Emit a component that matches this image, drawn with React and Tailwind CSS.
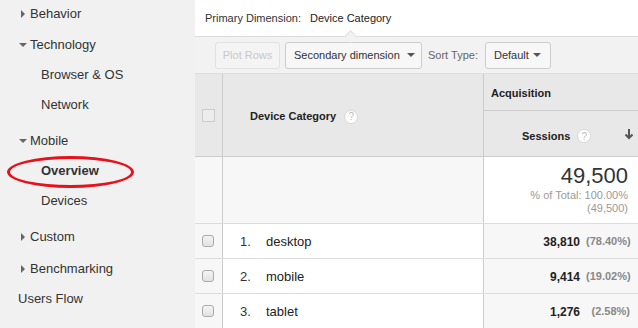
import React from "react";

const font = { fontFamily: '"Liberation Sans", Arial, sans-serif' };

const Tri = ({ open }) =>
    open ? (
        <span className="inline-block w-0 h-0 border-l-[4px] border-r-[4px] border-t-[4px] border-l-transparent border-r-transparent border-t-[#666] mr-[3px] mb-[1px]" />
    ) : (
        <span className="inline-block w-0 h-0 border-t-[4px] border-b-[4px] border-l-[4px] border-t-transparent border-b-transparent border-l-[#666] mr-[5px] ml-[1px]" />
    );

const Caret = () => (
    <span className="inline-block w-0 h-0 border-l-[4px] border-r-[4px] border-t-[4px] border-l-transparent border-r-transparent border-t-[#555]" />
);

const Help = () => (
    <span className="inline-flex items-center justify-center w-[14px] h-[14px] rounded-full bg-white border border-[#d8d8d8] text-[10px] text-[#bbb] font-normal">?</span>
);

const Check = () => (
    <span className="inline-block w-[12px] h-[12px] rounded-[3px] border border-[#aaa] bg-gradient-to-b from-[#f4f4f4] to-[#e2e2e2]" />
);

const Sidebar = () => (
    <div className="w-[195px] shrink-0 bg-[#f1f1f1] text-[13px] text-[#333] flex flex-col">
        <div className="h-[30px] shrink-0 -mt-[1px] flex items-center pl-[20px]"><Tri />Behavior</div>
        <div className="h-[30px] shrink-0 mt-[1px] flex items-center pl-[19px]"><Tri open />Technology</div>
        <div className="h-[30px] shrink-0 flex items-center pl-[41px]">Browser &amp; OS</div>
        <div className="h-[30px] shrink-0 flex items-center pl-[41px]">Network</div>
        <div className="h-[30px] shrink-0 mt-[6px] flex items-center pl-[19px]"><Tri open />Mobile</div>
        <div className="h-[30px] shrink-0 flex items-center pl-[41px] font-bold relative">
            Overview
            <span className="absolute left-[7px] top-0 w-[127px] h-[32px] rounded-[50%] border-[3px] border-[#e8101a]" />
        </div>
        <div className="h-[30px] shrink-0 flex items-center pl-[41px]">Devices</div>
        <div className="h-[30px] shrink-0 mt-[6px] flex items-center pl-[20px]"><Tri />Custom</div>
        <div className="h-[30px] shrink-0 mt-[2px] flex items-center pl-[20px]"><Tri />Benchmarking</div>
        <div className="h-[30px] shrink-0 flex items-center pl-[18px]">Users Flow</div>
    </div>
);

const rows = [
    { n: "1.", name: "desktop", v: "38,810", p: "(78.40%)" },
    { n: "2.", name: "mobile", v: "9,414", p: "(19.02%)" },
    { n: "3.", name: "tablet", v: "1,276", p: "(2.58%)" },
];

export default function App() {
    return (
        <div className="w-[638px] h-[328px] overflow-hidden flex bg-white" style={font}>
            <Sidebar />
            <div className="flex-1 flex flex-col">
                {/* primary dimension */}
                <div className="h-[36px] shrink-0 flex items-center pl-[10px] text-[11px] text-[#333] relative">
                    <span>Primary Dimension:</span>
                    <span className="ml-[9px] text-[11px] text-[#222]">Device Category</span>
                    <span className="absolute left-[151px] bottom-[-5px] w-[9px] h-[9px] rotate-45 bg-[#f2f2f2] border-l border-t border-[#ddd] z-10" />
                </div>

                {/* toolbar */}
                <div className="h-[38px] shrink-0 border-t border-b border-[#ddd] bg-[#f2f2f2] flex items-center pl-[20px] text-[11px] whitespace-nowrap">
                    <div className="w-[65px] h-[27px] border border-[#e2e2e2] rounded-[3px] flex items-center justify-center text-[#c8c8c8] bg-[#f4f4f4]">Plot Rows</div>
                    <div className="ml-[5px] w-[137px] h-[27px] border border-[#ccc] rounded-[3px] flex items-center justify-between pl-[8px] pr-[6px] text-[#333] bg-[#f7f7f7]">
                        <span>Secondary dimension</span><Caret />
                    </div>
                    <span className="ml-[6px] text-[#666]">Sort Type:</span>
                    <div className="ml-[7px] w-[66px] h-[27px] border border-[#ccc] rounded-[3px] flex items-center justify-between pl-[8px] pr-[9px] text-[#333] bg-[#f7f7f7]">
                        <span>Default</span><Caret />
                    </div>
                </div>

                {/* header */}
                <div className="h-[83px] shrink-0 flex bg-[#e8e8e8] border-b border-[#ccc] text-[11px] text-[#222]">
                    <div className="w-[28px] border-r border-[#ccc] flex items-center justify-center">
                        <span className="inline-block w-[13px] h-[13px] border border-[#ccc] bg-[#ececec]" />
                    </div>
                    <div className="w-[261px] border-r border-[#ccc] flex items-center pl-[27px] pt-[3px] font-bold">
                        Device Category<span className="ml-[8px]"><Help /></span>
                    </div>
                    <div className="flex-1 flex flex-col font-bold">
                        <div className="h-[37px] border-b border-[#ccc] flex items-center pl-[7px] pt-[3px]">Acquisition</div>
                        <div className="flex-1 flex items-center pl-[38px] pt-[5px]">
                            Sessions<span className="ml-[7px]"><Help /></span>
                            <svg className="ml-auto mr-[4px] -mt-[4px]" width="10" height="12" viewBox="0 0 10 12">
                                <path d="M5 1v9M1.5 6.5L5 10l3.5-3.5" stroke="#555" strokeWidth="2" fill="none" />
                            </svg>
                        </div>
                    </div>
                </div>

                {/* totals */}
                <div className="h-[67px] shrink-0 flex border-b border-[#ddd]">
                    <div className="w-[28px] border-r border-[#ccc] bg-[#f7f7f7]" />
                    <div className="w-[261px] border-r border-[#ccc] bg-[#f7f7f7]" />
                    <div className="flex-1 bg-white flex flex-col items-end pr-[10px] pt-[8px] leading-none">
                        <span className="text-[22px] text-[#333]">49,500</span>
                        <span className="text-[11px] text-[#999] mt-[3px]">% of Total: 100.00%</span>
                        <span className="text-[11px] text-[#999] mt-[2px]">(49,500)</span>
                    </div>
                </div>

                {/* rows */}
                {rows.map((r) => (
                    <div key={r.n} className="h-[35px] shrink-0 flex border-b border-[#ddd] text-[13px] text-[#333]">
                        <div className="w-[28px] border-r border-[#ccc] bg-[#f7f7f7] flex items-center pl-[7px]"><Check /></div>
                        <div className="w-[261px] border-r border-[#ccc] bg-white flex items-center pt-[1px]">
                            <span className="w-[43px] pl-[17px]">{r.n}</span>
                            <span className="text-[#222]">{r.name}</span>
                        </div>
                        <div className="flex-1 bg-[#f7f7f7] flex items-center justify-end pr-[8px] pt-[1px]">
                            <span className="font-bold text-[12px] text-[#222]">{r.v}</span>
                            <span className="ml-[6px] w-[44px] shrink-0 text-right text-[11px] font-bold text-[#888]">{r.p}</span>
                        </div>
                    </div>
                ))}
            </div>
        </div>
    );
}
